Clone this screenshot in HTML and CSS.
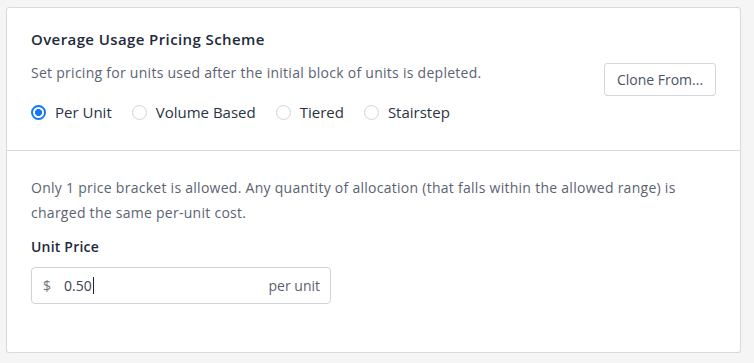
FILE: index.html
```html
<!DOCTYPE html>
<html>
<head>
<meta charset="utf-8">
<link rel="stylesheet" href="styles.css">
</head>
<body>
<div class="card">
  <section class="head">
    <div class="head-main">
      <h2 class="title">Overage Usage Pricing Scheme</h2>
      <p class="desc">Set pricing for units used after the initial block of units is depleted.</p>
      <div class="radios">
        <label class="radio"><span class="dot checked"></span>Per Unit</label>
        <label class="radio"><span class="dot"></span>Volume Based</label>
        <label class="radio"><span class="dot"></span>Tiered</label>
        <label class="radio"><span class="dot"></span>Stairstep</label>
      </div>
    </div>
    <button class="btn">Clone From...</button>
  </section>
  <section class="body">
    <p class="info">Only 1 price bracket is allowed. Any quantity of allocation (that falls within the allowed range) is charged the same per-unit cost.</p>
    <div class="label">Unit Price</div>
    <div class="input">
      <span class="cur">$</span>
      <span class="val">0.50<span class="caret"></span></span>
      <span class="suffix">per unit</span>
    </div>
  </section>
</div>
</body>
</html>
```
FILE: styles.css
```css
* { box-sizing: border-box; }
html, body { margin: 0; }
body {
  background: #f5f5f5;
  font-family: "Open Sans", "Noto Sans", sans-serif;
  color: #1e2a3b;
  padding: 7px 13px 0 6px;
}
.card {
  background: #fff;
  border: 1px solid #d9d9d9;
  border-radius: 3px;
  height: 346px;
  box-shadow: 0 1px 1px rgba(0,0,0,0.06);
}
.head {
  display: flex;
  align-items: flex-start;
  justify-content: space-between;
  padding: 21px 24px 0 24px;
  height: 143px;
  border-bottom: 1px solid #dadada;
}
.title {
  margin: 0;
  font-size: 15px;
  font-weight: 600;
  line-height: 20px;
  letter-spacing: 0.4px;
  color: #1e2a3b;
}
.desc {
  margin: 14px 0 0;
  font-size: 14px;
  line-height: 20px;
  letter-spacing: 0.27px;
  color: #5b6372;
}
.radios {
  display: flex;
  gap: 20px;
  margin-top: 19px;
}
.radio {
  display: flex;
  align-items: center;
  gap: 9px;
  font-size: 15px;
  color: #2a3344;
  line-height: 20px;
}
.dot {
  width: 15px;
  height: 15px;
  border-radius: 50%;
  border: 1px solid #cfd3d8;
  background: #fff;
  display: inline-block;
}
.dot.checked {
  border: 2px solid #1279f0;
  background: radial-gradient(circle, #1279f0 0 3.3px, #fff 3.8px);
}
.btn {
  margin-top: 34px;
  width: 112px;
  height: 33px;
  background: #fff;
  border: 1px solid #d3d6da;
  border-radius: 3px;
  font-family: inherit;
  font-size: 14px;
  color: #4b5363;
  padding: 0;
}
.body {
  padding: 25px 24px 0 24px;
}
.info {
  margin: 0;
  font-size: 14px;
  line-height: 24.5px;
  letter-spacing: 0.27px;
  color: #5b6372;
}
.label {
  margin-top: 12px;
  font-size: 14px;
  font-weight: 600;
  line-height: 20px;
  letter-spacing: 0.2px;
  color: #1e2a3b;
}
.input {
  margin-top: 10px;
  width: 300px;
  height: 37px;
  border: 1px solid #cfd3d8;
  border-radius: 4px;
  display: flex;
  align-items: center;
  padding: 0 10px 0 11px;
  font-size: 14px;
  color: #4b5363;
}
.cur { color: #6b7280; width: 21px; }
.val { flex: 1; display: flex; align-items: center; color: #3a4252; }
.caret { display: inline-block; width: 1px; height: 17px; background: #222; margin-left: 1px; }
.suffix { color: #5b6372; }
```
